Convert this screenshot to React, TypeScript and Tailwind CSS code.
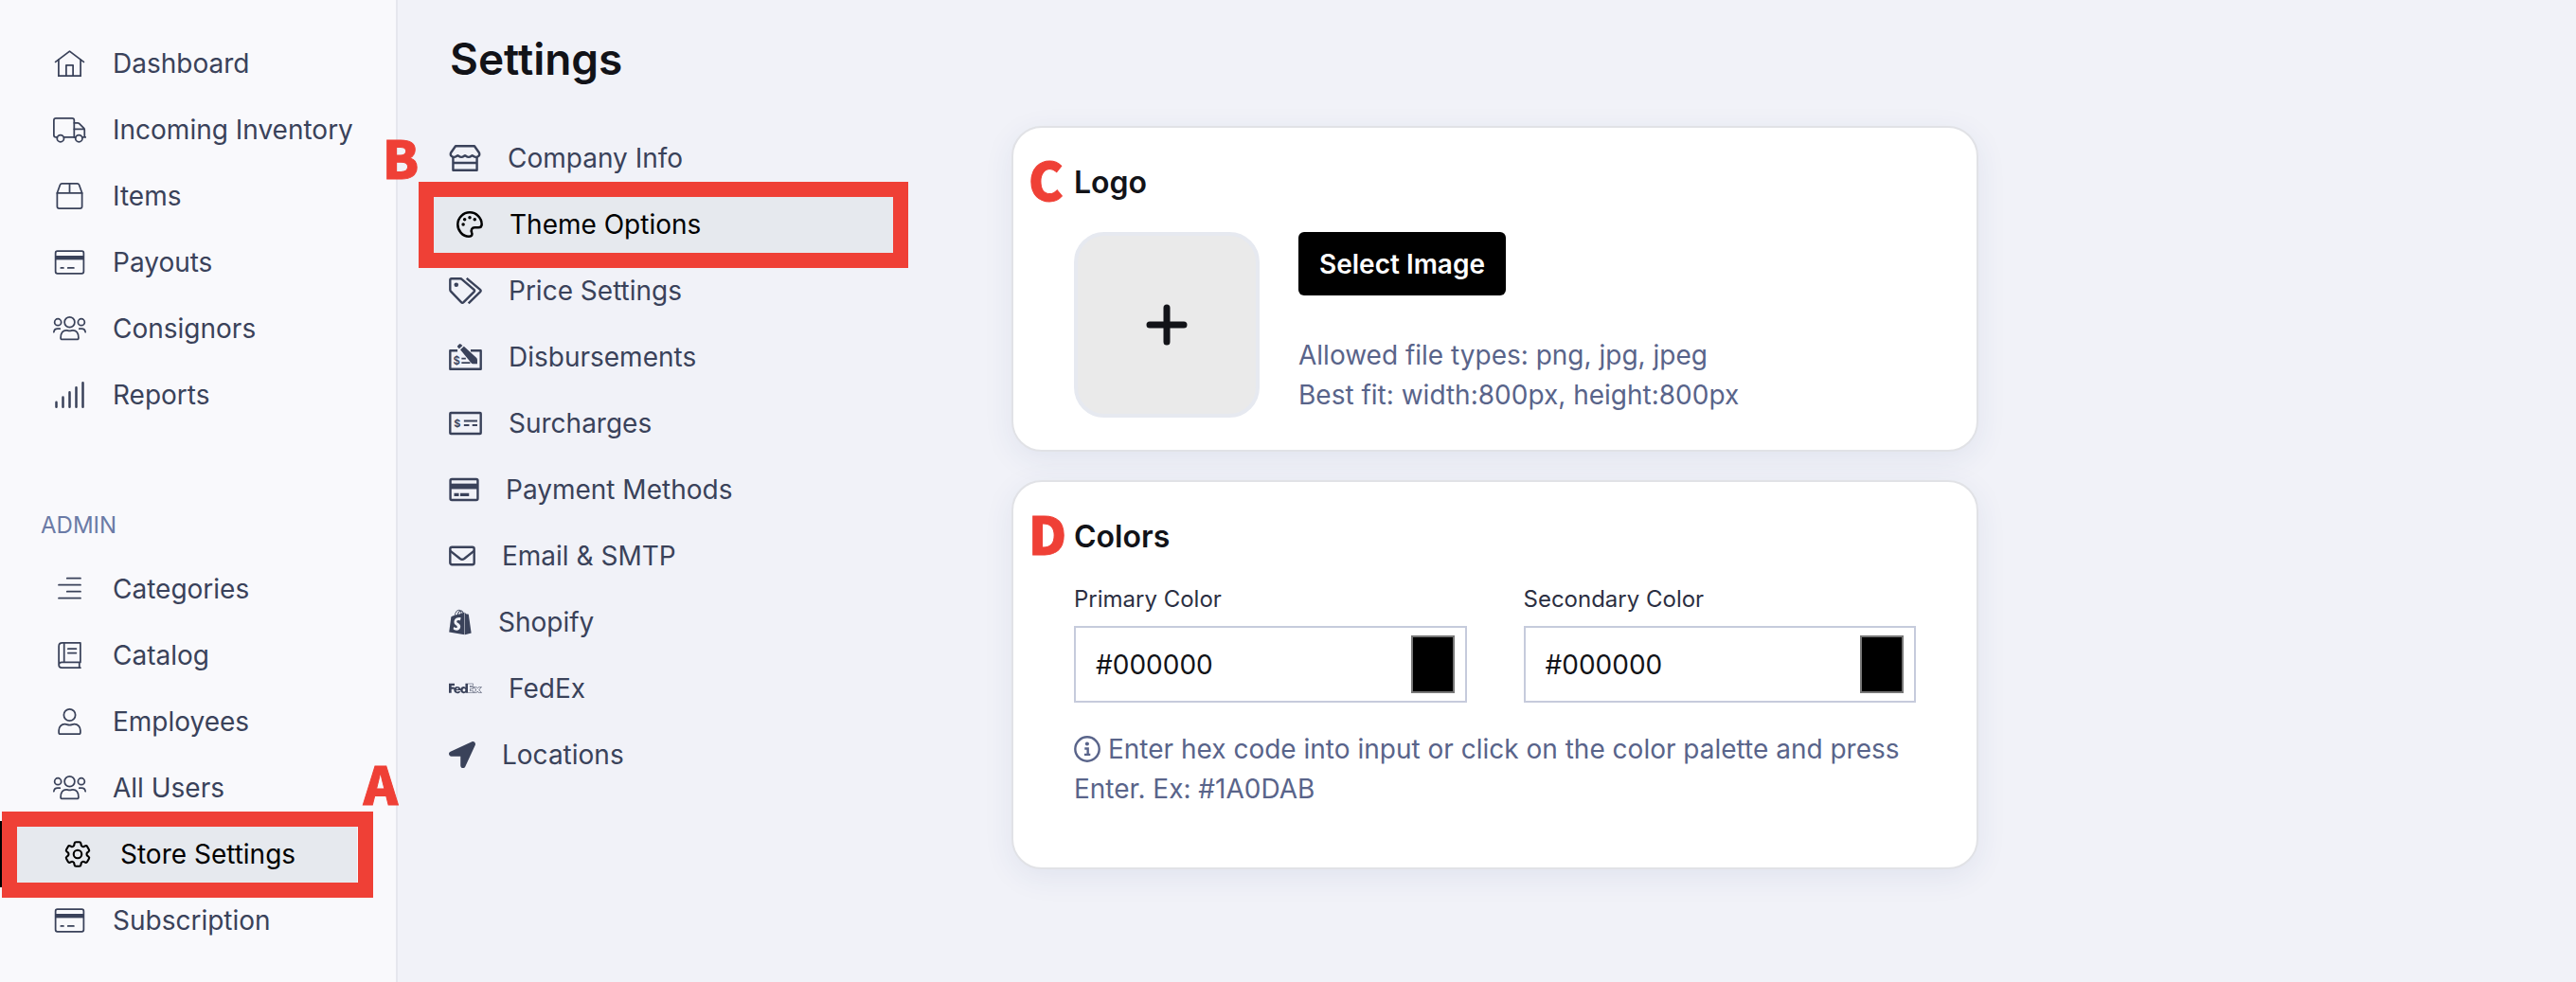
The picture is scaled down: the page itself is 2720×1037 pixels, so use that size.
import { useState } from "react";
import type { ReactNode } from "react";
import { FaLocationArrow } from "react-icons/fa";
import { FaFedex, FaShopify } from "react-icons/fa6";
import { HiOutlineCog6Tooth } from "react-icons/hi2";

type IconProps = { className?: string };

// Outline icons share a 512-unit tall box, light = 32 stroke, regular = 44
function Light({ children }: { children: ReactNode }) {
  return (
    <svg className="w-[35px] h-[28px] shrink-0" viewBox="0 0 640 512" fill="none" stroke="currentColor" strokeWidth={32} strokeLinecap="round" strokeLinejoin="round">
      {children}
    </svg>
  );
}

const HomeIcon = () => (
  <Light>
    <path d="M48 226 L320 20 L592 226" />
    <path d="M108 186 V496 H532 V186" strokeLinejoin="miter" />
    <path d="M254 496 V288 H386 V496" />
  </Light>
);

const TruckIcon = () => (
  <Light>
    <path d="M80 400 H56 Q16 400 16 360 V72 Q16 32 56 32 H368 Q408 32 408 72 V400 H212" />
    <path d="M408 124 H476 Q492 124 504 136 L596 228 Q608 240 608 256 V400 H568 M408 400 H432 M408 244 H600 M608 400 H628" />
    <circle cx="144" cy="424" r="66" />
    <circle cx="500" cy="424" r="66" />
  </Light>
);

const BoxIcon = () => (
  <Light>
    <path d="M80 196 L136 42 Q146 16 172 16 H468 Q494 16 504 42 L560 196 V456 Q560 496 520 496 H120 Q80 496 80 456 Z" />
    <path d="M80 200 H560 M320 16 V200" />
  </Light>
);

const CardIcon = () => (
  <Light>
    <rect x="48" y="40" width="544" height="432" rx="36" />
    <path d="M48 128 H592 V208 H48 Z" fill="currentColor" strokeWidth={0} />
    <path d="M152 364 H200 M288 364 H400" />
  </Light>
);

const UsersIcon = () => (
  <Light>
    <circle cx="320" cy="132" r="98" />
    <circle cx="94" cy="132" r="64" />
    <circle cx="546" cy="132" r="64" />
    <path d="M148 432 C148 344 192 288 256 288 C282 288 292 300 320 300 C348 300 358 288 384 288 C448 288 492 344 492 432 Q492 464 460 464 H180 Q148 464 148 432 Z" />
    <path d="M16 324 C20 284 52 260 88 260 H132 M624 324 C620 284 588 260 552 260 H508" />
  </Light>
);

const SignalIcon = () => (
  <Light>
    <path strokeWidth={46} d="M64 400 V488 M192 304 V488 M320 208 V488 M448 114 V488 M576 24 V488" />
  </Light>
);

const ListIcon = () => (
  <Light>
    <path d="M270 48 H530 M110 176 H530 M270 304 H530 M110 432 H530" />
  </Light>
);

const BookIcon = () => (
  <Light>
    <path d="M528 16 H176 Q112 16 112 80 V440 Q112 496 168 496 H528 M528 16 V392 M112 440 Q112 392 168 392 H528 M508 392 V496 M214 16 V392" />
    <path d="M290 132 H446 M290 212 H446" />
  </Light>
);

const UserIcon = () => (
  <Light>
    <circle cx="320" cy="128" r="112" />
    <path d="M112 464 V424 C112 358 160 304 228 304 C262 304 278 322 320 322 C362 322 378 304 412 304 C480 304 528 358 528 424 V464 Q528 496 496 496 H144 Q112 496 112 464 Z" />
  </Light>
);

const GearIcon = () => (
  <span className="w-[35px] flex justify-center shrink-0">
    <HiOutlineCog6Tooth className="w-[34px] h-[34px] shrink-0" />
  </span>
);

const StoreIcon = () => (
  <svg className="w-[34px] h-[28px] shrink-0" viewBox="0 0 616 512" fill="none" stroke="currentColor" strokeWidth={44} strokeLinejoin="round">
    <path d="M126 22 H490 L580 150 C600 200 570 236 520 236 C480 236 462 206 448 206 C434 206 418 236 378 236 C338 236 322 206 308 206 C294 206 278 236 238 236 C198 236 182 206 168 206 C154 206 136 236 96 236 C46 236 16 200 36 150 Z" />
    <path d="M78 236 V490 H538 V236 M78 346 H538" />
  </svg>
);

const PaletteIcon = () => (
  <svg className="w-[28px] h-[28px] shrink-0" viewBox="0 0 512 512" fill="none" stroke="currentColor" strokeWidth={46}>
    <path d="M488 256 C488 128 384 24 256 24 S24 128 24 256 C24 376 118 488 240 488 C296 488 314 452 296 416 C272 360 300 316 352 316 H424 C466 316 488 292 488 256 Z" />
    <g fill="currentColor" stroke="none">
      <circle cx="158" cy="160" r="32" />
      <circle cx="256" cy="124" r="32" />
      <circle cx="352" cy="160" r="32" />
      <circle cx="130" cy="256" r="32" />
    </g>
  </svg>
);

const TagsIcon = () => (
  <svg className="w-[35px] h-[28px] shrink-0" viewBox="0 0 640 512" fill="none" stroke="currentColor" strokeWidth={44} strokeLinejoin="round">
    <path d="M24 50 Q24 24 50 24 H222 Q240 24 254 38 L484 234 Q504 254 486 276 L284 478 Q260 500 238 478 L36 268 Q24 256 24 238 Z" />
    <path d="M342 16 L604 236 Q624 254 606 276 L378 500" />
    <circle cx="142" cy="142" r="42" fill="currentColor" stroke="none" />
  </svg>
);

const CheckPenIcon = () => (
  <svg className="w-[35px] h-[28px] shrink-0" viewBox="0 0 640 512" fill="none" stroke="currentColor" strokeWidth={44} strokeLinejoin="round">
    <path d="M166 132 H24 V488 H616 V132 H420" />
    <path d="M244 286 H326 M244 366 H410" strokeWidth={32} />
    <path d="M220 112 L290 50 L530 268 Q548 284 548 310 V388 H462 Q444 388 430 372 Z" fill="currentColor" stroke="none" />
    <path d="M168 66 Q156 52 170 38 L200 8 Q214 -4 230 8 L264 36 L198 94 Z" fill="currentColor" stroke="none" />
    <text x="84" y="396" fontSize="208" fontWeight="600" fill="currentColor" stroke="none">$</text>
  </svg>
);

const CheckIcon = () => (
  <svg className="w-[35px] h-[28px] shrink-0" viewBox="0 0 640 512" fill="none" stroke="currentColor" strokeWidth={44} strokeLinejoin="round">
    <rect x="24" y="54" width="592" height="404" rx="14" />
    <path d="M290 210 H548 M290 292 H392 M452 292 H548" strokeWidth={40} />
    <text x="98" y="324" fontSize="200" fontWeight="700" fill="currentColor" stroke="none">$</text>
  </svg>
);

const CardBoldIcon = () => (
  <svg className="w-[32px] h-[28px] shrink-0" viewBox="0 0 576 512" fill="none" stroke="currentColor" strokeWidth={44}>
    <rect x="24" y="56" width="528" height="400" rx="28" />
    <path d="M24 140 H552 V246 H24 Z" fill="currentColor" stroke="none" />
    <path d="M96 354 H188 M214 354 H384" strokeWidth={56} />
  </svg>
);

const MailIcon = () => (
  <svg className="w-[28px] h-[28px] shrink-0" viewBox="0 0 512 512" fill="none" stroke="currentColor" strokeWidth={44} strokeLinejoin="round">
    <rect x="24" y="88" width="464" height="336" rx="36" />
    <path d="M24 158 L216 310 Q256 338 296 310 L488 158" />
  </svg>
);

const InfoIcon = ({ className }: IconProps) => (
  <svg className={className} viewBox="0 0 512 512" fill="none" stroke="currentColor" strokeWidth={44}>
    <circle cx="256" cy="256" r="232" />
    <path d="M206 248 H268 V364 M200 364 H316" />
    <circle cx="254" cy="156" r="38" fill="currentColor" stroke="none" />
  </svg>
);

const MAIN_LINKS = [
  { label: "Dashboard", icon: <HomeIcon /> },
  { label: "Incoming Inventory", icon: <TruckIcon /> },
  { label: "Items", icon: <BoxIcon /> },
  { label: "Payouts", icon: <CardIcon /> },
  { label: "Consignors", icon: <UsersIcon /> },
  { label: "Reports", icon: <SignalIcon /> },
];

const ADMIN_LINKS = [
  { label: "Categories", icon: <ListIcon /> },
  { label: "Catalog", icon: <BookIcon /> },
  { label: "Employees", icon: <UserIcon /> },
  { label: "All Users", icon: <UsersIcon /> },
  { label: "Store Settings", icon: <GearIcon />, active: true },
  { label: "Subscription", icon: <CardIcon /> },
];

const SETTINGS_LINKS = [
  { label: "Company Info", icon: <StoreIcon /> },
  { label: "Theme Options", icon: <PaletteIcon />, active: true },
  { label: "Price Settings", icon: <TagsIcon /> },
  { label: "Disbursements", icon: <CheckPenIcon /> },
  { label: "Surcharges", icon: <CheckIcon /> },
  { label: "Payment Methods", icon: <CardBoldIcon /> },
  { label: "Email & SMTP", icon: <MailIcon /> },
  { label: "Shopify", icon: <FaShopify className="w-[24px] h-[28px]" /> },
  { label: "FedEx", icon: <FaFedex className="w-[35px] h-[28px]" /> },
  { label: "Locations", icon: <FaLocationArrow className="w-[28px] h-[28px]" /> },
];

const MARKER = "absolute font-['Noto_Sans_CJK_SC',sans-serif] font-black text-[55px] leading-none text-[#ef4036] [-webkit-text-stroke:1px_#ef4036] pointer-events-none";

function SidebarLink({ label, icon, active }: { label: string; icon: ReactNode; active?: boolean }) {
  return (
    <li className="relative">
      <a
        href="#"
        className={`flex items-center gap-[28px] h-[70px] mr-[41px] pl-[56px] ${active ? "border-l-8 border-black bg-[#e6e9ee] text-black" : ""}`}
      >
        {icon}
        {label}
      </a>
      {active && (
        <>
          <span className="absolute left-[2px] right-[24px] -top-[10px] -bottom-[11px] border-[16px] border-[#ef4036] pointer-events-none" />
          <span className={`${MARKER} right-[-2px] -top-[68px]`}>A</span>
        </>
      )}
    </li>
  );
}

function SettingsLink({ label, icon, active }: { label: string; icon: ReactNode; active?: boolean }) {
  return (
    <li className="relative">
      <a
        href="#"
        className={`flex items-center gap-[28px] h-[70px] pl-[32px] ${active ? "border-l-8 border-black bg-[#e6e9ee] text-black" : ""}`}
      >
        {icon}
        {label}
      </a>
      {active && (
        <>
          <span className="absolute left-0 -right-[16px] -top-[10px] -bottom-[11px] border-[16px] border-[#ef4036] pointer-events-none" />
          <span className={`${MARKER} -left-[38px] -top-[64px]`}>B</span>
        </>
      )}
    </li>
  );
}

function Card({ title, marker, children }: { title: string; marker: string; children: ReactNode }) {
  return (
    <section className="relative bg-white border-2 border-[#e1e2e6] rounded-[32px] shadow-[0_8px_32px_rgba(40,60,130,0.08)] px-[64px] pt-[36px]">
      <span className={`${MARKER} left-[16px] top-[26px]`}>{marker}</span>
      <h2 className="text-[32px] leading-[44px] font-semibold text-[#121318]">{title}</h2>
      {children}
    </section>
  );
}

function ColorField({ id, label }: { id: string; label: string }) {
  const [value, setValue] = useState("#000000");

  return (
    <div className="flex-1 min-w-0">
      <label htmlFor={id} className="block text-[24px] leading-[32px] text-[#2b2f42]">{label}</label>
      <div className="mt-[12px] h-[81px] flex items-center border-2 border-[#c6cbdc] pl-[21px] pr-[11px]">
        <input
          id={id}
          type="text"
          value={value}
          onChange={(e) => setValue(e.target.value)}
          className="flex-1 min-w-0 bg-transparent outline-none text-[28px] text-[#121318]"
        />
        <input
          type="color"
          aria-label={`${label} palette`}
          value={value}
          onChange={(e) => setValue(e.target.value)}
          className="w-[46px] h-[61px] shrink-0 appearance-none bg-transparent p-0 [&::-webkit-color-swatch-wrapper]:p-0 [&::-webkit-color-swatch]:rounded-none [&::-webkit-color-swatch]:border-2 [&::-webkit-color-swatch]:border-[#777777]"
        />
      </div>
    </div>
  );
}

export default function App() {
  return (
    <div className="flex min-h-screen bg-[#f1f2f8] font-[Inter,sans-serif] text-[28px] leading-[42px] text-[#3a425a]">
      {/* Sidebar */}
      <aside className="w-[420px] shrink-0 bg-[#f9f9fc] border-r-2 border-[#e6e7ee] pt-[32px]">
        <ul>
          {MAIN_LINKS.map((l) => <SidebarLink key={l.label} {...l} />)}
        </ul>
        <h3 className="mt-[87px] mb-[16px] pl-[43px] text-[24px] leading-[32px] text-[#6b7ba6]">ADMIN</h3>
        <ul>
          {ADMIN_LINKS.map((l) => <SidebarLink key={l.label} {...l} />)}
        </ul>
      </aside>

      <main className="flex-1 min-w-0 pl-[22px] pr-8">
        <h1 className="pt-[34px] pl-[33px] text-[46px] leading-[56px] font-semibold text-[#121318]">Settings</h1>

        <div className="flex items-start mt-[42px]">
          <nav className="w-[501px] shrink-0">
            <ul>
              {SETTINGS_LINKS.map((l) => <SettingsLink key={l.label} {...l} />)}
            </ul>
          </nav>

          <div className="flex-1 min-w-0 max-w-[1021px] ml-[125px] mt-[1px] space-y-[30px]">
            <Card title="Logo" marker="C">
              <div className="flex gap-[41px] mt-[30px] pb-[34px]">
                <button aria-label="Add logo" className="w-[196px] h-[196px] shrink-0 flex items-center justify-center bg-[#eaeaea] border-4 border-[#e6e9f0] rounded-[32px] text-[#121318]">
                  <svg className="w-[44px] h-[44px]" viewBox="0 0 44 44" fill="none" stroke="currentColor" strokeWidth={7} strokeLinecap="round">
                    <path d="M22 4 V40 M4 22 H40" />
                  </svg>
                </button>
                <div>
                  <button className="h-[67px] px-[22px] rounded-md bg-black text-white text-[28px] font-semibold">Select Image</button>
                  <p className="mt-[42px] text-[#59648a]">
                    Allowed file types: png, jpg, jpeg
                    <br />
                    Best fit: width:800px, height:800px
                  </p>
                </div>
              </div>
            </Card>

            <Card title="Colors" marker="D">
              <div className="flex gap-[60px] mt-[28px]">
                <ColorField id="primary" label="Primary Color" />
                <ColorField id="secondary" label="Secondary Color" />
              </div>
              <p className="mt-[28px] pb-[62px] text-[#59648a]">
                <InfoIcon className="inline-block w-[28px] h-[28px] mr-2 -mt-1" />
                Enter hex code into input or click on the color palette and press Enter. Ex: #1A0DAB
              </p>
            </Card>
          </div>
        </div>
      </main>
    </div>
  );
}
